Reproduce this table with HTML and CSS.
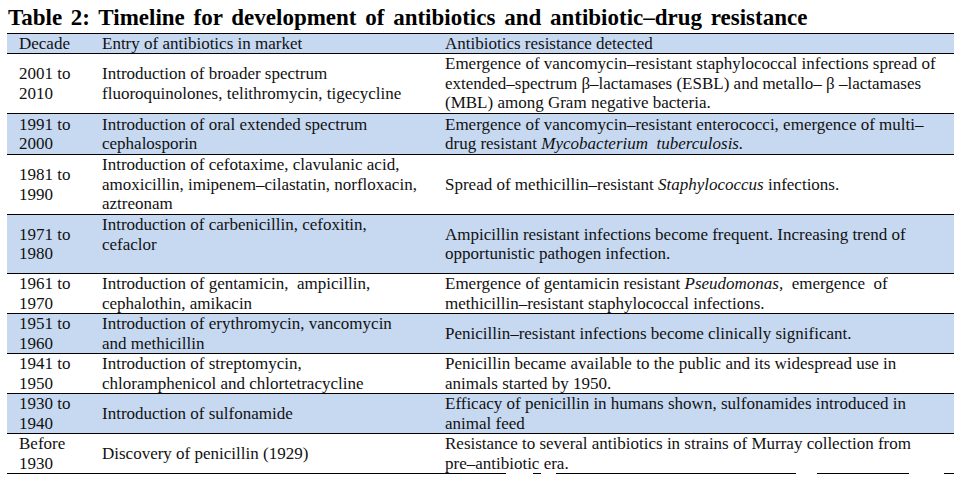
FILE: index.html
```html
<!DOCTYPE html>
<html>
<head>
<meta charset="utf-8">
<link rel="stylesheet" href="styles.css">
</head>
<body>
<div class="page">
  <h1 class="title">Table 2: Timeline for development of antibiotics and antibiotic–drug resistance</h1>
  <table class="tl">
    <colgroup><col class="c1"><col class="c2"><col class="c3"></colgroup>
    <tr class="head blue">
      <td>Decade</td><td>Entry of antibiotics in market</td><td>Antibiotics resistance detected</td>
    </tr>
    <tr class="h60">
      <td>2001 to<br>2010</td>
      <td>Introduction of broader spectrum<br>fluoroquinolones, telithromycin, tigecycline</td>
      <td>Emergence of vancomycin–resistant staphylococcal infections spread of<br>extended–spectrum β–lactamases (ESBL) and metallo– β –lactamases<br>(MBL) among Gram negative bacteria.</td>
    </tr>
    <tr class="h41 blue">
      <td>1991 to<br>2000</td>
      <td>Introduction of oral extended spectrum<br>cephalosporin</td>
      <td>Emergence of vancomycin–resistant enterococci, emergence of multi–<br>drug resistant <i>Mycobacterium&nbsp; tuberculosis.</i></td>
    </tr>
    <tr class="h60">
      <td>1981 to<br>1990</td>
      <td>Introduction of cefotaxime, clavulanic acid,<br>amoxicillin, imipenem–cilastatin, norfloxacin,<br>aztreonam</td>
      <td>Spread of methicillin–resistant <i>Staphylococcus</i> infections.</td>
    </tr>
    <tr class="h59 blue">
      <td>1971 to<br>1980</td>
      <td class="top">Introduction of carbenicillin, cefoxitin,<br>cefaclor</td>
      <td>Ampicillin resistant infections become frequent. Increasing trend of<br>opportunistic pathogen infection.</td>
    </tr>
    <tr class="h40">
      <td>1961 to<br>1970</td>
      <td>Introduction of gentamicin,&nbsp; ampicillin,<br>cephalothin, amikacin</td>
      <td>Emergence of gentamicin resistant <i>Pseudomonas,</i>&nbsp; emergence&nbsp; of<br>methicillin–resistant staphylococcal infections.</td>
    </tr>
    <tr class="h40 blue">
      <td>1951 to<br>1960</td>
      <td>Introduction of erythromycin, vancomycin<br>and methicillin</td>
      <td>Penicillin–resistant infections become clinically significant.</td>
    </tr>
    <tr class="h40">
      <td>1941 to<br>1950</td>
      <td>Introduction of streptomycin,<br>chloramphenicol and chlortetracycline</td>
      <td>Penicillin became available to the public and its widespread use in<br>animals started by 1950.</td>
    </tr>
    <tr class="h40 blue">
      <td>1930 to<br>1940</td>
      <td>Introduction of sulfonamide</td>
      <td>Efficacy of penicillin in humans shown, sulfonamides introduced in<br>animal feed</td>
    </tr>
    <tr class="h38 last">
      <td>Before<br>1930</td>
      <td>Discovery of penicillin (1929)</td>
      <td>Resistance to several antibiotics in strains of Murray collection from<br>pre–antibiotic era.</td>
    </tr>
  </table>
  <div class="rule">
    <span class="seg s1"></span><span class="seg s2"></span><span class="seg s3"></span><span class="seg s4"></span><span class="seg s5"></span>
  </div>
</div>
</body>
</html>
```
FILE: styles.css
```css
html, body {
  margin: 0;
  padding: 0;
  background: #ffffff;
}
.page {
  padding-left: 7px;
  font-family: "Liberation Serif", "Times New Roman", serif;
  color: #111111;
}
.title {
  margin: 0;
  height: 30px;
  padding-top: 3px;
  line-height: 30px;
  font-size: 23px;
  font-weight: bold;
  color: #000000;
  white-space: nowrap;
  padding-left: 1px;
  word-spacing: 3px;
}
.tl {
  width: 947px;
  border-collapse: separate;
  border-spacing: 0;
  table-layout: fixed;
  font-size: 17px;
  line-height: 19.5px;
}
.c1 { width: 88px; }
.c2 { width: 343px; }
.c3 { width: 516px; }
.tl td {
  padding: 0 0 0 7px;
  vertical-align: middle;
  white-space: nowrap;
  border-bottom: 1px solid #000000;
  overflow: visible;
}
.tl td:first-child { padding-left: 12px; }
.tl td.top { vertical-align: top; }
.tl tr.head td {
  border-top: 1px solid #000000;
  height: 19px;
  line-height: 19px;
}
.blue td { background: #c6d9f1; }
.h60 td { height: 59px; }
.h59 td { height: 58px; }
.h41 td { height: 40px; }
.h40 td { height: 39px; }
.h38 td { height: 38px; }
.tl tr.last td { border-bottom: none; }
.rule {
  display: flex;
  height: 1px;
}
.seg {
  display: block;
  height: 1px;
  background: #000000;
}
.s1 { width: 499px; }
.s2 { width: 8px; margin-left: 27px; }
.s3 { width: 240px; margin-left: 15px; }
.s4 { width: 92px; margin-left: 21px; }
.s5 { width: 10px; margin-left: 35px; }
```
